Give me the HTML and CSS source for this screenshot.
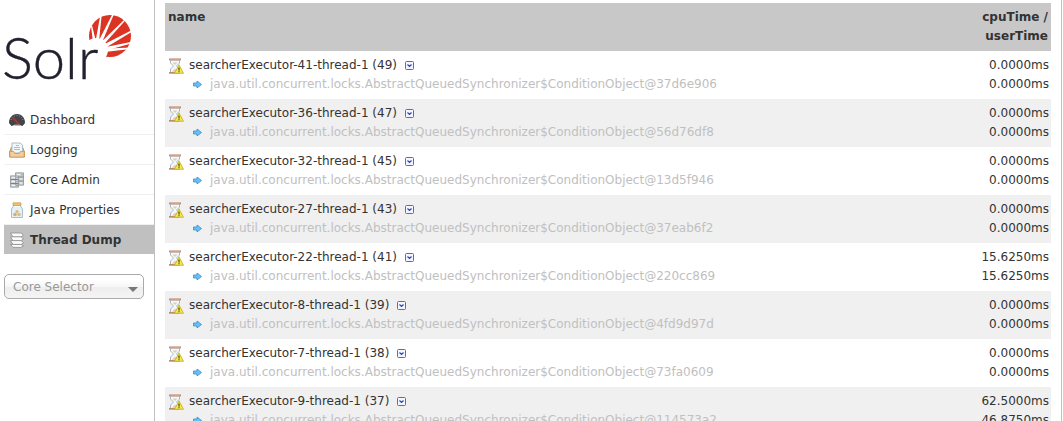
FILE: index.html
```html
<!DOCTYPE html>
<html lang="en">
<head>
    <meta charset="UTF-8">
    <meta name="viewport" content="width=device-width, initial-scale=1.0">
    <title>Solr Admin</title>
    <link rel="stylesheet" href="styles.css">
</head>
<body>
    <svg class="sprite" aria-hidden="true">
        <symbol id="hourglass" viewBox="0 0 16 16">
            <path d="M2.500 2h9v3L8.500 8l3 3v3.500h-9V11l3-3-3-3z" fill="#f4f9fc" stroke="#a3bccd"/>
            <path d="M4.500 4.500h5L7 7z" fill="#ecc8a4"/>
            <path d="M4 13.800l3-3.300 3 3.300z" fill="#ecc8a4"/>
            <path d="M1 .5h12v1.800H1z" fill="#c07c5c"/>
            <path d="M1.500 1h11v.6h-11z" fill="#e8b498"/>
            <path d="M1 14h10v1.700H1z" fill="#c08a68"/>
            <path d="M11 6.800l4.500 8.500h-9z" fill="#f6e64a" stroke="#c4ac2c" stroke-width=".8" stroke-linejoin="round"/>
            <path d="M10.500 9.500h1v3h-1zM10.500 13.300h1v1h-1z" fill="#222"/>
        </symbol>
        <symbol id="arrow" viewBox="0 0 9 9">
            <path d="M.5 3H4V1l4.500 3.500L4 8V6H.5z" fill="#62c6f4" stroke="#3a88cc" stroke-width=".8" stroke-linejoin="round"/>
        </symbol>
        <symbol id="expand" viewBox="0 0 9 9">
            <rect x=".5" y=".5" width="8" height="8" rx="1" fill="#f4f6ff" stroke="#4c6ae0"/>
            <path d="M2.500 3.500l2 2 2-2" fill="none" stroke="#2c44b4" stroke-width="1.200"/>
        </symbol>
    </svg>

    <div class="wrapper">
        <aside class="sidebar">
            <a href="#" class="logo" aria-label="Solr">
                <svg width="134" height="104" viewBox="0 0 134 104">
                    <circle cx="110" cy="36" r="21" fill="#db3423"/>
                    <g fill="#fff">
                        <circle cx="96" cy="50" r="12"/>
                        <path d="M91 26h1.200L98 50h-4z"/>
                        <path d="M100.500 14h1.300L98 51l-4-1z"/>
                        <path d="M113 13l1.200.5L98 52l-4-2z"/>
                        <path d="M124 20l1 .8L97 52l-3-3z"/>
                        <path d="M132 30l.7 1.200L97 53l-2-4z"/>
                        <path d="M133 41.500v1.400L97 53l-1-4z"/>
                        <path d="M131 47.500l-.5 1.400L96 53v-4z"/>
                    </g>
                    <text x="2" y="79" class="logo-text">Solr</text>
                </svg>
            </a>
            <nav>
                <ul class="menu">
                    <li><a href="#">
                        <svg class="icon" viewBox="0 0 16 16">
                            <path d="M.5 11C.5 5.500 3.500 2.500 8 2.500s7.500 3 7.500 8.500l-2 2.500C10 12 6 12 2.500 13.500z" fill="#42464a" stroke="#2c2f32" stroke-width=".8"/>
                            <path d="M2 8c1-3 3.300-4.500 6-4.500S13 5 14 8" fill="none" stroke="#8c9094" stroke-dasharray="1 1.500"/>
                            <path d="M3.500 5.500L11 13" stroke="#d32a24" stroke-width="1.400"/>
                            <path d="M5 12.300q3-1 6 0l-1 1.200H6z" fill="#707478"/>
                        </svg>
                        Dashboard</a></li>
                    <li><a href="#">
                        <svg class="icon" viewBox="0 0 16 16">
                            <path d="M2.500 5h11l2 5v5H.5v-5z" fill="#e9b273" stroke="#cf9458"/>
                            <path d="M3 1h8l2.500 2v8H3z" fill="#f2f8fa" stroke="#a8bec6"/>
                            <path d="M7 3.500h3M5 5.500h6M5 7.500h6" stroke="#a5c3bf"/>
                            <path d="M.8 9.500h4l1 2h4.400l1-2h4V15H.8z" fill="#f5cd9b" stroke="#cf9458" stroke-width=".8"/>
                        </svg>
                        Logging</a></li>
                    <li><a href="#">
                        <svg class="icon" viewBox="0 0 16 16">
                            <path d="M6 .5h9v13H6zM1 3.500h9v12H1z" fill="#b4b9bb"/>
                            <path d="M6.500 1h8v12h-8zM1.500 4h8v11h-8z" fill="#cdd2d4" stroke="#989da0" stroke-width=".8"/>
                            <path d="M9.500 5h5M9.500 9h5M1.500 7.500h8M1.500 11.500h8" stroke="#7c8184"/>
                            <path d="M3 5.500h3M3 9.500h3M3 13.500h3M8 2.500h3M11 7h2M11 11h2" stroke="#f4f6f6"/>
                            <path d="M7.500 5h1v1h-1zM7.500 9h1v1h-1zM7.500 13h1v1h-1zM12.500 2.500h1v1h-1z" fill="#6b9a76"/>
                        </svg>
                        Core Admin</a></li>
                    <li><a href="#">
                        <svg class="icon" viewBox="0 0 16 16">
                            <path d="M4.500 4h7l2 3v8.500h-11V7z" fill="#e6f0f8" stroke="#a6c0d4"/>
                            <path d="M4 .8h8v2.700H4z" fill="#ecc468" stroke="#c49c48" stroke-width=".7"/>
                            <path d="M5 4.500h6" stroke="#fff"/>
                            <circle cx="8" cy="9.500" r="1.600" fill="#dcb97c"/>
                            <circle cx="6" cy="12.500" r="1.800" fill="#d4ae6c"/>
                            <circle cx="10" cy="12.500" r="1.800" fill="#dfbd80"/>
                        </svg>
                        Java Properties</a></li>
                    <li class="active"><a href="#">
                        <svg class="icon" viewBox="0 0 16 16">
                            <g fill="#fafafa" stroke="#8a8a8a" stroke-width=".8" stroke-linejoin="round">
                                <path d="M1.500 1H12l2.500 2-2.500 2H4z"/>
                                <path d="M1.500 4.800H12l2.500 2-2.500 2H4z"/>
                                <path d="M1.500 8.600H12l2.500 2-2.500 2H4z"/>
                                <path d="M1.500 12.400H12l2.500 1.500-2.500 1.500H4z"/>
                            </g>
                        </svg>
                        Thread Dump</a></li>
                </ul>
            </nav>
            <div class="core-selector">
                <select aria-label="Core Selector">
                    <option>Core Selector</option>
                </select>
            </div>
        </aside>

        <main class="content">
            <table class="threads">
                <thead>
                    <tr>
                        <th>name</th>
                        <th class="time">cpuTime / userTime</th>
                    </tr>
                </thead>
                <tbody>
                    <tr>
                        <td>
                            <div class="thread"><svg class="state"><use href="#hourglass"/></svg><a href="#">searcherExecutor-41-thread-1 (49)</a><svg class="expand"><use href="#expand"/></svg></div>
                            <p class="lock"><svg class="arrow"><use href="#arrow"/></svg>java.util.concurrent.locks.AbstractQueuedSynchronizer$ConditionObject@37d6e906</p>
                        </td>
                        <td class="time">0.0000ms<br>0.0000ms</td>
                    </tr>
                    <tr>
                        <td>
                            <div class="thread"><svg class="state"><use href="#hourglass"/></svg><a href="#">searcherExecutor-36-thread-1 (47)</a><svg class="expand"><use href="#expand"/></svg></div>
                            <p class="lock"><svg class="arrow"><use href="#arrow"/></svg>java.util.concurrent.locks.AbstractQueuedSynchronizer$ConditionObject@56d76df8</p>
                        </td>
                        <td class="time">0.0000ms<br>0.0000ms</td>
                    </tr>
                    <tr>
                        <td>
                            <div class="thread"><svg class="state"><use href="#hourglass"/></svg><a href="#">searcherExecutor-32-thread-1 (45)</a><svg class="expand"><use href="#expand"/></svg></div>
                            <p class="lock"><svg class="arrow"><use href="#arrow"/></svg>java.util.concurrent.locks.AbstractQueuedSynchronizer$ConditionObject@13d5f946</p>
                        </td>
                        <td class="time">0.0000ms<br>0.0000ms</td>
                    </tr>
                    <tr>
                        <td>
                            <div class="thread"><svg class="state"><use href="#hourglass"/></svg><a href="#">searcherExecutor-27-thread-1 (43)</a><svg class="expand"><use href="#expand"/></svg></div>
                            <p class="lock"><svg class="arrow"><use href="#arrow"/></svg>java.util.concurrent.locks.AbstractQueuedSynchronizer$ConditionObject@37eab6f2</p>
                        </td>
                        <td class="time">0.0000ms<br>0.0000ms</td>
                    </tr>
                    <tr>
                        <td>
                            <div class="thread"><svg class="state"><use href="#hourglass"/></svg><a href="#">searcherExecutor-22-thread-1 (41)</a><svg class="expand"><use href="#expand"/></svg></div>
                            <p class="lock"><svg class="arrow"><use href="#arrow"/></svg>java.util.concurrent.locks.AbstractQueuedSynchronizer$ConditionObject@220cc869</p>
                        </td>
                        <td class="time">15.6250ms<br>15.6250ms</td>
                    </tr>
                    <tr>
                        <td>
                            <div class="thread"><svg class="state"><use href="#hourglass"/></svg><a href="#">searcherExecutor-8-thread-1 (39)</a><svg class="expand"><use href="#expand"/></svg></div>
                            <p class="lock"><svg class="arrow"><use href="#arrow"/></svg>java.util.concurrent.locks.AbstractQueuedSynchronizer$ConditionObject@4fd9d97d</p>
                        </td>
                        <td class="time">0.0000ms<br>0.0000ms</td>
                    </tr>
                    <tr>
                        <td>
                            <div class="thread"><svg class="state"><use href="#hourglass"/></svg><a href="#">searcherExecutor-7-thread-1 (38)</a><svg class="expand"><use href="#expand"/></svg></div>
                            <p class="lock"><svg class="arrow"><use href="#arrow"/></svg>java.util.concurrent.locks.AbstractQueuedSynchronizer$ConditionObject@73fa0609</p>
                        </td>
                        <td class="time">0.0000ms<br>0.0000ms</td>
                    </tr>
                    <tr>
                        <td>
                            <div class="thread"><svg class="state"><use href="#hourglass"/></svg><a href="#">searcherExecutor-9-thread-1 (37)</a><svg class="expand"><use href="#expand"/></svg></div>
                            <p class="lock"><svg class="arrow"><use href="#arrow"/></svg>java.util.concurrent.locks.AbstractQueuedSynchronizer$ConditionObject@114573a2</p>
                        </td>
                        <td class="time">62.5000ms<br>46.8750ms</td>
                    </tr>
                </tbody>
            </table>
        </main>
    </div>
</body>
</html>
```

FILE: styles.css
```css
* {
    box-sizing: border-box;
}
body {
    background-color: #ffffff;
    color: #333333;
    font-family: Verdana, "DejaVu Sans", sans-serif;
    font-size: 12px;
    margin: 0;
    height: 100vh;
    overflow: hidden;
}
a {
    color: #333333;
    text-decoration: none;
}
.sprite {
    display: none;
}
.wrapper {
    display: flex;
    min-height: 100vh;
    padding-right: 1px;
}

/* sidebar */
.sidebar {
    flex: 0 0 155px;
    padding-left: 4px;
    border-right: 1px solid #c0c0c0;
}
.logo {
    display: block;
    height: 105px;
    margin-left: -4px;
}
.logo svg {
    display: block;
}
.logo-text {
    font-family: Lato, sans-serif;
    font-size: 58px;
    font-weight: 300;
    fill: #21202e;
    stroke: #21202e;
    stroke-width: 0.4;
}
.menu {
    list-style: none;
    margin: 0;
    padding: 0;
}
.menu li {
    border-bottom: 1px solid #f0f0f0;
}
.menu a {
    display: flex;
    align-items: center;
    gap: 5px;
    height: 29px;
    padding-left: 5px;
}
.menu .active {
    background-color: #c0c0c0;
    border-bottom: 0;
    font-weight: bold;
}
.icon {
    width: 16px;
    height: 16px;
}
.core-selector {
    position: relative;
    margin: 20px 10px 0 0;
}
.core-selector::after {
    content: "";
    position: absolute;
    right: 6px;
    top: 13px;
    border: 5px solid transparent;
    border-top-color: #777777;
    border-bottom: 0;
    pointer-events: none;
}
.core-selector select {
    appearance: none;
    display: block;
    width: 100%;
    height: 25px;
    padding: 0 8px;
    border: 1px solid #aaaaaa;
    border-radius: 5px;
    background: linear-gradient(#ffffff 20%, #f6f6f6 50%, #eeeeee 52%, #f4f4f4 100%);
    color: #999999;
    font: inherit;
}

/* thread table */
.content {
    flex: 1;
    min-width: 0;
    padding: 3px 10px 0;
    border-right: 1px solid #c0c0c0;
}
.threads {
    width: 100%;
    border-collapse: collapse;
    line-height: 19px;
}
.threads th {
    padding: 5px 3px;
    background-color: #c8c8c8;
    text-align: left;
    vertical-align: top;
}
.threads td {
    padding: 5px 2px 5px 3px;
    vertical-align: top;
}
.threads tbody tr:nth-child(even) {
    background-color: #f0f0f0;
}
.threads .time {
    width: 100px;
    text-align: right;
}
.thread {
    display: flex;
    align-items: center;
    height: 19px;
}
.state {
    width: 16px;
    height: 16px;
    margin-right: 5px;
}
.expand {
    width: 9px;
    height: 9px;
    margin-left: 8px;
}
.lock {
    display: flex;
    align-items: center;
    margin: 0;
    padding-left: 25px;
    color: #c0c0c0;
}
.arrow {
    width: 9px;
    height: 9px;
    margin-right: 8px;
}
```
